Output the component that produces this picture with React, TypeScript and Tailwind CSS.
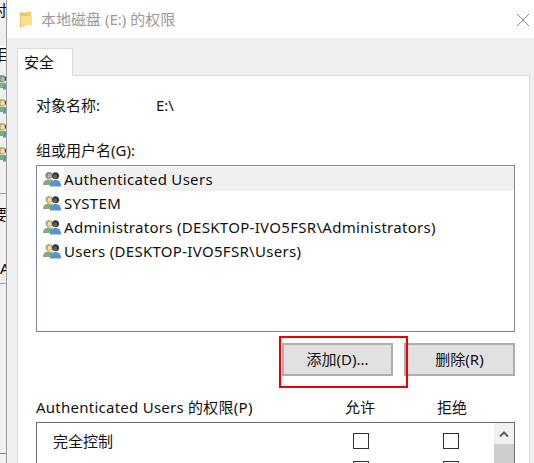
const font = { fontFamily: '"Noto Sans", "Noto Sans CJK SC", sans-serif' }

const users = [
  { name: "Authenticated Users", selected: true },
  { name: "SYSTEM", selected: false },
  { name: "Administrators (DESKTOP-IVO5FSR\\Administrators)", selected: false },
  { name: "Users (DESKTOP-IVO5FSR\\Users)", selected: false },
]

function UsersIcon({ dim = false, className = "" }: { dim?: boolean; className?: string }) {
  return (
    <svg viewBox="0 0 18 16" className={"h-4 w-[18px] shrink-0 " + className}>
      <circle cx="6" cy="4.500" r="3.600" fill={dim ? "#7f8f86" : "#c2a86e"} />
      <ellipse cx="6.600" cy="5.200" rx="2" ry="2.400" fill={dim ? "#a9b5ad" : "#f0d9b5"} />
      <path d="M0 14c0-4 2.500-5.500 6-5.500S11 10 11 14z" fill="#7fae78" />
      <circle cx="12.500" cy="4.800" r="3.500" fill="#2c3844" />
      <ellipse cx="12" cy="5.800" rx="2" ry="2.300" fill="#7a5a44" />
      <path d="M7 15.500c0-4.500 2-6.500 5.500-6.500s5.500 2 5.500 6.500z" fill="#5b94c9" />
    </svg>
  )
}

function FolderIcon() {
  return (
    <svg viewBox="0 0 12 17" className="h-[17px] w-3">
      <path d="M0 1l6 1v12l-5 3-1-1z" fill="#e9c765" />
      <path d="M1 5h11v9H4l-3 3z" fill="#f8df8e" />
      <path d="M6 1h5v4H6z" fill="#efcf70" />
    </svg>
  )
}

function Checkbox() {
  return <span className="block size-4 border border-[#333333] bg-white" />
}

function BackgroundStrip() {
  return (
    <div className="flex w-[7px] shrink-0 flex-col overflow-hidden border-r border-[#a0a0a0] bg-[#f0f0f0] text-[15px] leading-4 text-black">
      <div className="-ml-2 mt-[2px] h-4 w-5">对</div>
      <div className="-ml-[3px] mt-[28px] h-4 w-5 bg-white">目</div>
      <UsersIcon dim className="mt-[12px] -ml-1" />
      <UsersIcon className="mt-2 -ml-1" />
      <UsersIcon className="mt-2 -ml-1" />
      <UsersIcon className="mt-2 -ml-1" />
      <div className="mt-[31px] h-px w-full shrink-0 bg-[#a0a0a0]" />
      <div className="-ml-2 mt-[12px] h-4 w-5">要</div>
      <div className="ml-0 mt-[38px] h-4 w-5">A</div>
      <div className="mt-[7px] h-px w-full shrink-0 bg-[#a0a0a0]" />
      <div className="mt-[169px] h-px w-full shrink-0 bg-[#808080]" />
    </div>
  )
}

export default function App() {
  return (
    <div className="flex h-[463px] w-[534px] overflow-hidden bg-white text-[15px] text-[#111111]" style={font}>
      <BackgroundStrip />

      <div className="flex min-w-0 flex-1 flex-col">
        <header className="flex h-[38px] shrink-0 items-center bg-white pl-[13px] pr-[5px]">
          <FolderIcon />
          <h1 className="ml-[9px] flex-1 text-[15px] font-normal text-[#9a9a9a]">本地磁盘 (E:) 的权限</h1>
          <svg viewBox="0 0 12 12" className="mb-[-1px] size-3" stroke="#8a8a8a" strokeWidth="1">
            <path d="M0 0l12 12M12 0L0 12" />
          </svg>
        </header>

        <div className="flex flex-1 flex-col bg-[#f0f0f0] pl-[10px] pr-[4px] pt-[10px]">
          <div className="relative z-10 -mb-px flex h-7 w-[56px] shrink-0 items-center border border-b-0 border-[#d9d9d9] bg-white pb-px pl-[6px]">
            安全
          </div>

          <main className="flex-1 border border-[#d9d9d9] bg-white pl-[18px] pr-[14px]">
            <div className="mt-[19px] flex h-5 items-center">
              <span className="w-[120px]">对象名称:</span>
              <span>E:\</span>
            </div>
            <div className="mt-[25px] flex h-5 items-center">组或用户名(G):</div>

            <ul className="mt-[5px] h-[167px] border border-[#82878f] pt-px">
              {users.map((user) => (
                <li key={user.name} className="flex h-6 items-center pl-[6px]">
                  <UsersIcon dim={user.selected} />
                  <span
                    className={
                      "ml-[3px] flex-1 leading-6 tracking-[0.3px] " + (user.selected ? "bg-[#f0f0f0]" : "")
                    }
                  >
                    {user.name}
                  </span>
                </li>
              ))}
            </ul>

            <div className="relative mt-[11px] flex justify-end gap-[11px]">
              <button className="h-[33px] w-[111px] border-2 border-[#adadad] bg-[#e1e1e1]">添加(D)...</button>
              <button className="h-[33px] w-[111px] border-2 border-[#adadad] bg-[#e1e1e1]">删除(R)</button>
              <div className="pointer-events-none absolute left-[243px] top-[-7px] h-[52px] w-[129px] border-2 border-[#ee0000]" />
            </div>

            <div className="mt-[21px] flex h-5 items-center">
              <span className="flex-1 tracking-[0.25px]">Authenticated Users 的权限(P)</span>
              <span className="w-[92px]">允许</span>
              <span className="w-[78px]">拒绝</span>
            </div>

            <div className="mt-[5px] flex h-[60px] border border-[#6e6e6e]">
              <div className="flex-1 pt-[10px]">
                <div className="flex h-4 items-center pl-4 pr-[35px]">
                  <span className="flex-1">完全控制</span>
                  <div className="flex gap-[74px]">
                    <Checkbox />
                    <Checkbox />
                  </div>
                </div>
                <div className="mt-3 flex justify-end gap-[74px] pr-[35px]">
                  <Checkbox />
                  <Checkbox />
                </div>
              </div>
              <div className="flex w-[20px] flex-col bg-[#f0f0f0]">
                <div className="flex h-[21px] items-center justify-center">
                  <svg viewBox="0 0 10 6" className="h-[6px] w-[10px]" fill="none" stroke="#606060" strokeWidth="2">
                    <path d="M1 5.500l4-4 4 4" />
                  </svg>
                </div>
                <div className="flex-1 bg-[#cdcdcd]" />
              </div>
            </div>
          </main>
        </div>
      </div>
    </div>
  )
}
